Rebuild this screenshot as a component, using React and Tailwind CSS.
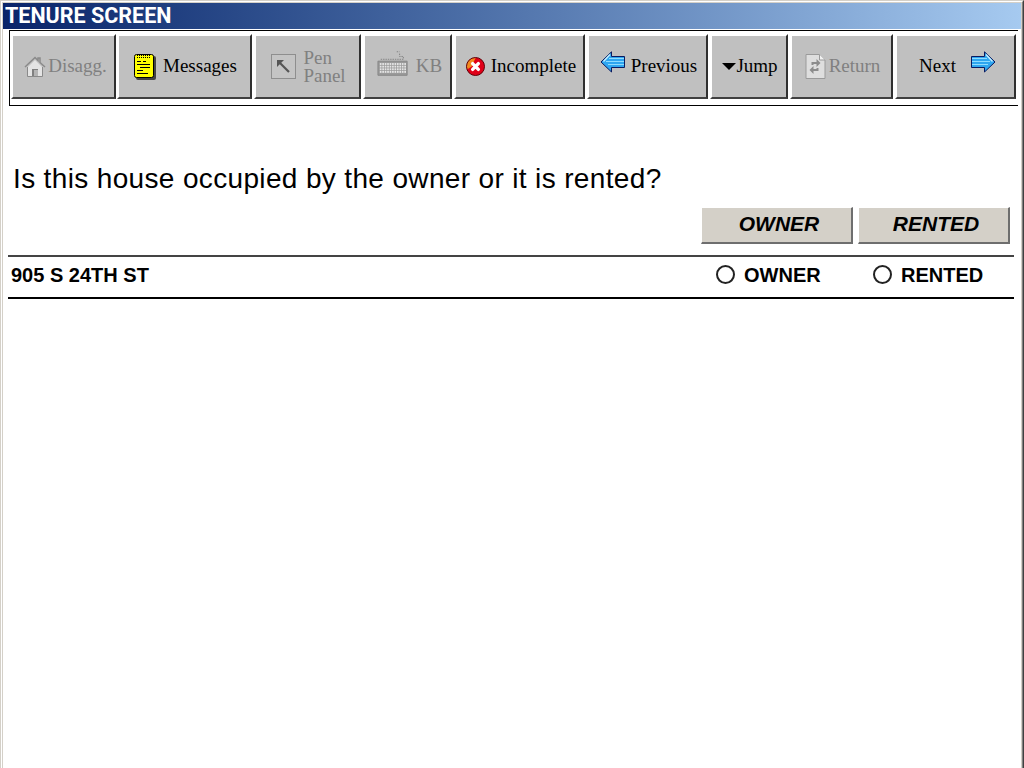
import React from 'react';

const serif = "font-['Liberation_Serif',serif]";
const sans = "font-['Liberation_Sans',sans-serif]";

function HouseIcon() {
  return (
    <svg width="22" height="22" viewBox="0 0 22 22">
      <path d="M4 11 L11 4 L18 11 V20 H4 Z" fill="#e4e4e4" />
      <path d="M1 11 L11 1.5 L14 4.5 V2 H16 V6.5 L21 11" fill="none" stroke="#8a8a8a" strokeWidth="1.5" />
      <path d="M3.5 11 V20.5 H18.5 V11" fill="none" stroke="#8a8a8a" />
      <rect x="8" y="13" width="6" height="7" fill="#808080" />
      <rect x="10" y="14" width="4" height="6" fill="#b4b4b4" />
    </svg>
  );
}

function NotepadIcon() {
  return (
    <svg width="22" height="26" viewBox="0 0 22 26">
      <rect x="2" y="2" width="20" height="24" rx="2" fill="#444" />
      <rect x="0.5" y="0.5" width="19" height="23" rx="2" fill="#ffff00" stroke="#000" />
      <path d="M3 1.5 H17 M3 3.5 H17" stroke="#000" strokeDasharray="1 1" />
      <path d="M3 7.5 H7 M9 7.5 H12 M3 10.5 H16 M6 13.5 H16 M3 16.5 H9 M3 19.5 H14" stroke="#000" />
    </svg>
  );
}

function PenIcon() {
  return (
    <svg width="25" height="25" viewBox="0 0 25 25">
      <rect x="0.5" y="0.5" width="24" height="24" fill="#c4c4c4" stroke="#8e8e8e" />
      <path d="M7 7 L18 18" stroke="#555" strokeWidth="2.2" />
      <path d="M6 6 H13 L6 13 Z" fill="#555" />
    </svg>
  );
}

function KeyboardIcon() {
  const keys = [];
  for (let r = 0; r < 4; r++) {
    for (let c = 0; c < 11; c++) {
      keys.push(<rect key={r + '-' + c} x={3 + c * 2.6} y={13 + r * 2.8} width="1.8" height="2" fill="#e6e6e6" />);
    }
  }
  return (
    <svg width="32" height="28" viewBox="0 0 34 28">
      <path d="M4 9 H28 V6 H24 V3 M21 1 H24" fill="none" stroke="#808080" strokeDasharray="1.5 1" />
      <path d="M1 11 H32 V26 H1 Z" fill="#9a9a9a" stroke="#858585" />
      {keys}
    </svg>
  );
}

function ErrorIcon() {
  return (
    <svg width="19" height="19" viewBox="0 0 20 20">
      <circle cx="10" cy="10" r="9.5" fill="#e00018" />
      <path d="M1.5 13 A8.5 8.5 0 0 1 10 1 L6 10 Z" fill="#f28a1e" />
      <circle cx="10" cy="10" r="9.5" fill="none" stroke="#5c0006" />
      <path d="M7 7 L13 13 M13 7 L7 13" stroke="#fff" strokeWidth="3.6" strokeLinecap="round" />
    </svg>
  );
}

function ArrowIcon({ dir }) {
  return (
    <svg width="25" height="22" viewBox="0 0 25 22" className={`mb-[9px] ${dir === 'left' ? '-scale-x-100' : ''}`}>
      <path d="M0.5 5.5 H13.5 V0.8 L24 11 L13.5 21 V16.5 H0.5 Z" fill="#2ea6f0" stroke="#0a1a60" />
      <path d="M1 7.5 H16 M1 10.5 H19 M1 13.5 H17" stroke="#8edcff" strokeWidth="1.2" />
      <path d="M15 3.5 L21.5 10.5" stroke="#c8f0ff" strokeWidth="1.4" />
    </svg>
  );
}

function ReturnIcon() {
  return (
    <svg width="21" height="25" viewBox="0 0 20 25">
      <path d="M0.5 0.5 H14 L19.5 6 V24.5 H0.5 Z" fill="#dedede" stroke="#9a9a9a" />
      <path d="M14 0.5 V6 H19.5" fill="#f2f2f2" stroke="#9a9a9a" />
      <path d="M6 11 V8 H11 V5 L15 9 L11 13 V10 H8 V11 Z" fill="#8c8c8c" />
      <path d="M13 14 V17 H8 V20 L4 16 L8 12 V15 H11 V14 Z" fill="#8c8c8c" />
    </svg>
  );
}

function ToolButton({ className, disabled, children }) {
  return (
    <div
      className={`h-[65px] flex items-center justify-center bg-[#c0c0c0] border-t-2 border-l-2 border-t-white border-l-white border-r-2 border-b-2 border-r-[#303030] border-b-[#404040] text-[19px] ${serif} ${disabled ? 'text-[#808080]' : 'text-black'} ${className}`}
    >
      {children}
    </div>
  );
}

function AnswerButton({ children, className }) {
  return (
    <div
      className={`h-[37px] pb-[2px] pl-[5px] flex items-center justify-center bg-[#d4d0c8] border-t border-l border-t-white border-l-white border-r-2 border-b-2 border-r-[#6e6e6e] border-b-[#6e6e6e] text-[21px] font-bold italic text-black ${sans} ${className}`}
    >
      {children}
    </div>
  );
}

function Radio({ label, className }) {
  return (
    <div className={`flex items-center gap-[9px] ${className}`}>
      <div className="w-[19px] h-[19px] rounded-full border-2 border-[#222] bg-white" />
      <span>{label}</span>
    </div>
  );
}

export default function App() {
  return (
    <div className="w-[1024px] h-[768px] overflow-hidden border-l border-t border-r border-l-[#d4d0c8] border-t-[#d4d0c8] border-r-[#404040]">
      <div className="h-full border-l border-t border-r border-l-white border-t-white border-r-[#808080]">
        <div className="h-full bg-white flex flex-col border-l border-t border-r border-[#d4d0c8]">
          <div className="h-[26px] shrink-0 flex items-center pl-[2px] bg-gradient-to-r from-[#0a246a] to-[#a6caf0] text-white text-[21.5px] font-bold font-['Roboto',sans-serif]">
            TENURE SCREEN
          </div>

          <div className="mt-[1px] ml-[6px] mr-[3px] h-[76px] shrink-0 border-y border-l border-black">
            <div className="flex gap-px pl-[1px] pt-[3px]">
              <ToolButton disabled className="w-[105px] gap-[2px] pl-[4px]"><HouseIcon /><span>Disagg.</span></ToolButton>
              <ToolButton className="w-[135px] gap-[7px] pl-[2px]"><NotepadIcon /><span>Messages</span></ToolButton>
              <ToolButton disabled className="w-[107px] ml-px gap-[7px] pl-[2px]"><PenIcon /><span className="leading-[18px]">Pen<br />Panel</span></ToolButton>
              <ToolButton disabled className="w-[89px] ml-px gap-[7px] pl-[4px]"><span className="mb-[6px]"><KeyboardIcon /></span><span>KB</span></ToolButton>
              <ToolButton className="w-[131px] ml-px gap-[6px] pl-[3px]"><ErrorIcon /><span>Incomplete</span></ToolButton>
              <ToolButton className="w-[121px] ml-px gap-[6px] pl-[2px]"><ArrowIcon dir="left" /><span>Previous</span></ToolButton>
              <ToolButton className="w-[78px] ml-px pl-[2px]"><span className="w-0 h-0 border-x-[7px] border-x-transparent border-t-[7px] border-t-black" /><span>Jump</span></ToolButton>
              <ToolButton disabled className="w-[103px] ml-px gap-[3px] pl-[2px]"><ReturnIcon /><span>Return</span></ToolButton>
              <ToolButton className="w-[121px] ml-px gap-[15px] pl-[4px]"><span>Next</span><ArrowIcon dir="right" /></ToolButton>
            </div>
          </div>

          <div className={`pl-[10px] pt-[56px] text-[28px] leading-[34px] tracking-[0.35px] text-black ${sans}`}>
            Is this house occupied by the owner or it is rented?
          </div>

          <div className="flex justify-end gap-[5px] pr-[11px] mt-[11px]">
            <AnswerButton className="w-[152px]">OWNER</AnswerButton>
            <AnswerButton className="w-[152px]">RENTED</AnswerButton>
          </div>

          <div className={`mt-[11px] ml-[5px] mr-[7px] h-[44px] pb-[5px] border-t-2 border-t-[#444] border-b-2 border-b-black flex items-center text-[20px] font-bold text-black ${sans}`}>
            <div className="pl-[3px] flex-1">905 S 24TH ST</div>
            <Radio label="OWNER" className="w-[157px]" />
            <Radio label="RENTED" className="w-[141px]" />
          </div>
        </div>
      </div>
    </div>
  );
}
